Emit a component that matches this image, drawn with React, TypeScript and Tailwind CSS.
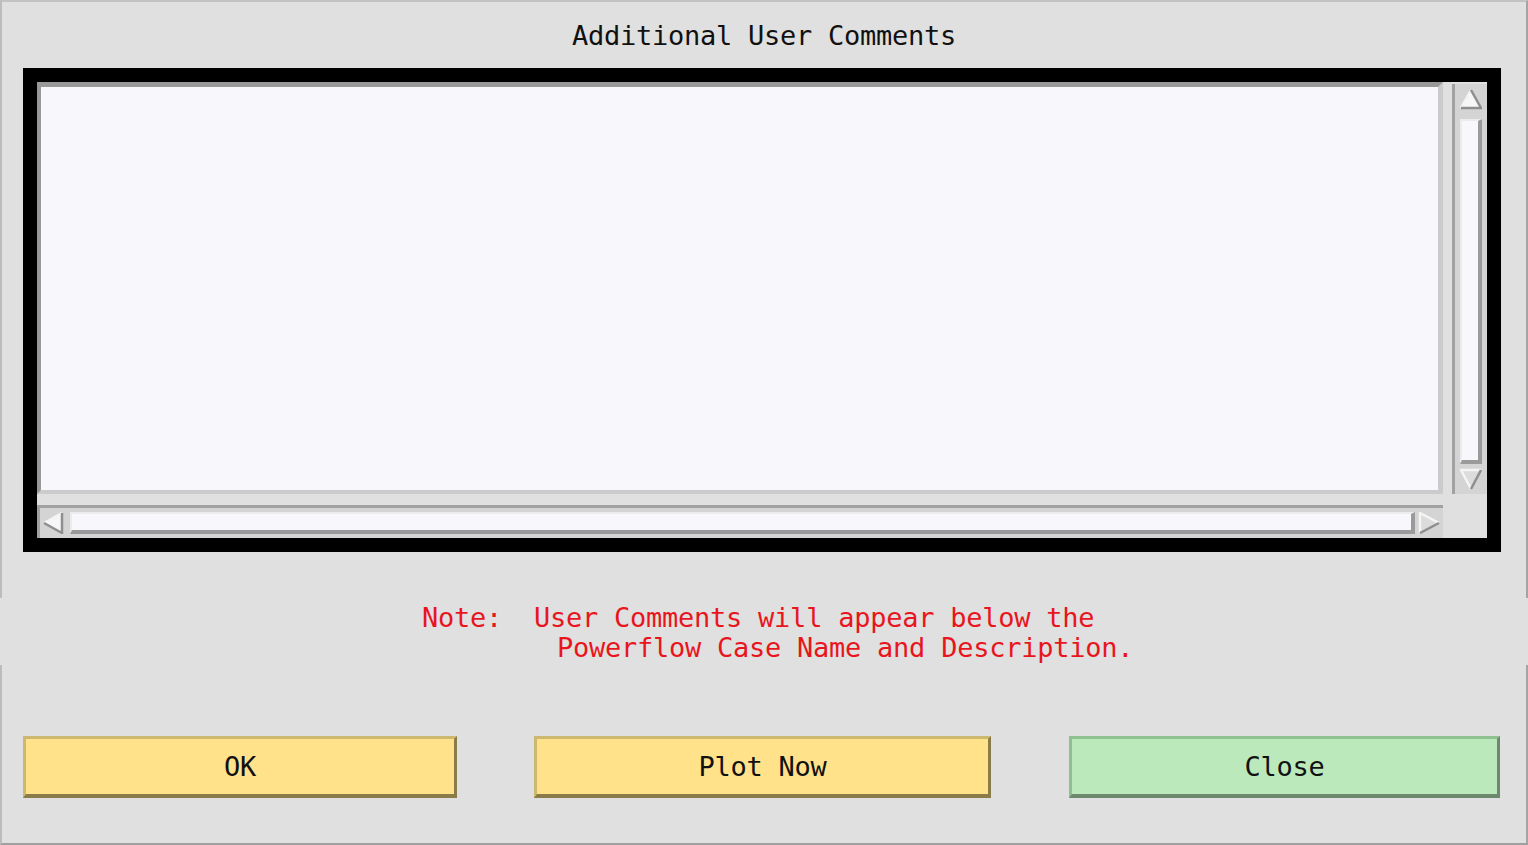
import React from 'react';

const mono = { fontFamily: '"DejaVu Sans Mono", "Liberation Mono", monospace' };

type Dir = 'up' | 'down' | 'left' | 'right';

function Arrow({ dir }: { dir: Dir }) {
  // bevelled outline triangles, light on the lit side and dark on the shaded side
  const shapes: Record<Dir, { fill: string; light: string; dark: string }> = {
    up: { fill: 'M11 2 L21 20 L1 20 Z', light: 'M1 20 L11 2', dark: 'M11 2 L21 20 L1 20' },
    down: { fill: 'M1 2 L21 2 L11 21 Z', light: 'M11 21 L1 2 L21 2', dark: 'M21 2 L11 21' },
    left: { fill: 'M2 11 L20 1 L20 21 Z', light: 'M2 11 L20 1', dark: 'M20 1 L20 21 L2 11' },
    right: { fill: 'M2 1 L21 11 L2 21 Z', light: 'M2 21 L2 1 L21 11', dark: 'M21 11 L2 21' },
  };
  const s = shapes[dir];
  return (
    <svg width="22" height="22" viewBox="0 0 22 22" className="shrink-0">
      <path d={s.fill} fill={dir === 'down' || dir === 'right' ? '#dcdcdc' : '#f6f6f8'} />
      <path d={s.light} fill="none" stroke="#f4f4f4" strokeWidth="2.5" strokeLinejoin="miter" />
      <path d={s.dark} fill="none" stroke="#8e8e8e" strokeWidth="2.5" strokeLinejoin="miter" />
    </svg>
  );
}

function VScrollbar() {
  return (
    <div className="mt-[2px] h-[410px] flex flex-col items-center bg-[#d4d4d4] border-l-[3px] border-[#a2a2a2] pt-[4px] pb-[4px]">
      <Arrow dir="up" />
      <div className="mt-[9px] mb-[4px] w-[22px] flex-1 bg-[#f8f8fc] border-l-[2px] border-t-[2px] border-[#ececec] border-r-[4px] border-b-[4px] border-r-[#9a9a9a] border-b-[#9a9a9a]" />
      <Arrow dir="down" />
    </div>
  );
}

function HScrollbar() {
  return (
    <div className="h-[33px] flex items-center bg-[#d4d4d4] border-t-[3px] border-l-[3px] border-[#a2a2a2] pl-[2px] pr-[3px]">
      <Arrow dir="left" />
      <div className="ml-[6px] mr-[3px] h-[22px] flex-1 bg-[#f8f8fc] border-l-[2px] border-t-[2px] border-[#ececec] border-r-[4px] border-b-[4px] border-r-[#9a9a9a] border-b-[#9a9a9a]" />
      <Arrow dir="right" />
    </div>
  );
}

function Button({ label, tone, width }: { label: string; tone: 'yellow' | 'green'; width: string }) {
  const toneClass =
    tone === 'yellow'
      ? 'bg-[#ffe28a] border-t-[3px] border-l-[3px] border-[#cdb870] border-r-[3px] border-b-[4px] border-r-[#8a7c48] border-b-[#8a7c48]'
      : 'bg-[#bbe9bb] border-t-[3px] border-l-[3px] border-[#8fc08f] border-r-[3px] border-b-[4px] border-r-[#6d886d] border-b-[#6d886d]';
  return (
    <button
      style={mono}
      className={`${width} h-[62px] ${toneClass} pt-[2px] text-[27px] tracking-[-0.25px] text-[#111] flex items-center justify-center`}
    >
      {label}
    </button>
  );
}

export default function App() {
  return (
    <div className="w-[1528px] h-[845px] bg-[#e0e0e0] flex flex-col overflow-hidden" style={mono}>
      {/* Top panel: title + comment editor */}
      <div className="h-[598px] border-t-2 border-l-2 border-r-2 border-t-[#c2c2c2] border-l-[#bcbcbc] border-r-[#a4a4a4] flex flex-col">
        <div className="h-[66px] pt-[2px] flex items-center justify-center text-[27px] tracking-[-0.25px] text-[#111]">
          Additional User Comments
        </div>
        <div className="ml-[21px] mr-[25px] h-[484px] border-[14px] border-black bg-[#e0e0e0] grid grid-cols-[1406px_35px] grid-rows-[412px_33px] gap-x-[9px] gap-y-[11px]">
          <textarea
            className="resize-none outline-none bg-[#f8f8fc] border-t-[5px] border-l-[4px] border-[#999999] border-r-[5px] border-b-[4px] border-r-[#cbcbcb] border-b-[#cbcbcb] text-[27px] p-1"
            style={mono}
          />
          <VScrollbar />
          <HScrollbar />
          <div />
        </div>
      </div>

      {/* Note */}
      <div className="h-[67px] pt-[5px] pl-[422px] text-[27px] leading-[30px] tracking-[-0.25px] text-[#e8161c] whitespace-pre">
        <div>Note:  User Comments will appear below the</div>
        <div className="pl-[135px]">Powerflow Case Name and Description.</div>
      </div>

      {/* Buttons */}
      <div className="flex-1 border-l-2 border-r-2 border-b-2 border-l-[#bcbcbc] border-r-[#a4a4a4] border-b-[#a0a0a0] pl-[21px] pt-[71px] flex items-start">
        <Button label="OK" tone="yellow" width="w-[434px]" />
        <div className="w-[77px]" />
        <Button label="Plot Now" tone="yellow" width="w-[457px]" />
        <div className="w-[78px]" />
        <Button label="Close" tone="green" width="w-[431px]" />
      </div>
    </div>
  );
}
